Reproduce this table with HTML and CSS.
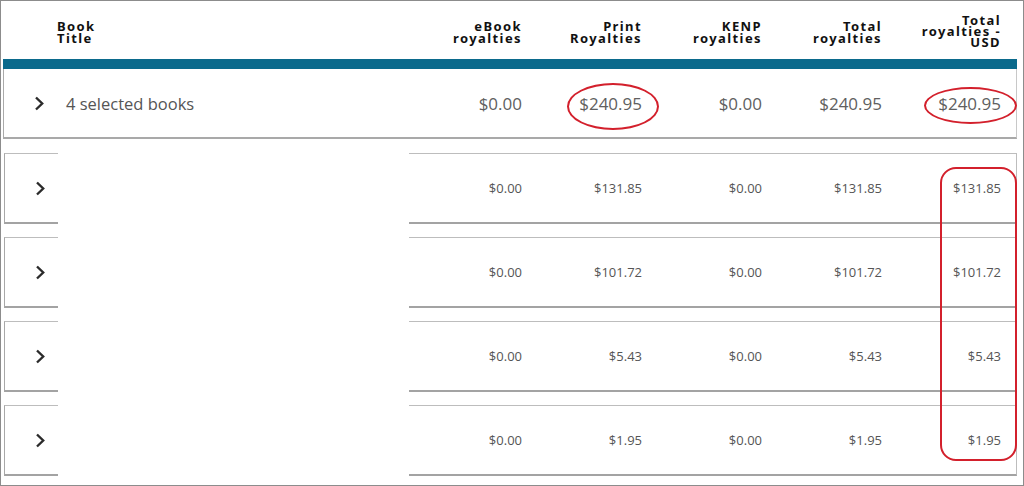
FILE: index.html
```html
<!DOCTYPE html>
<html>
<head>
<meta charset="utf-8">
<link rel="stylesheet" href="styles.css">
</head>
<body>
<div class="frame">
  <div class="head grid">
    <div class="h-title">Book<br>Title</div>
    <div class="h">eBook<br>royalties</div>
    <div class="h">Print<br>Royalties</div>
    <div class="h">KENP<br>royalties</div>
    <div class="h">Total<br>royalties</div>
    <div class="h h3">Total<br>royalties -<br>USD</div>
  </div>
  <div class="bar"></div>
  <div class="summary grid">
    <div class="title"><svg class="chev" viewBox="0 0 10 15"><path d="M2 1.5 L8.2 7.5 L2 13.5"/></svg><span class="sel">4 selected books</span></div>
    <div class="v big">$0.00</div>
    <div class="v big">$240.95</div>
    <div class="v big">$0.00</div>
    <div class="v big">$240.95</div>
    <div class="v big">$240.95</div>
  </div>
  <div class="rows">
    <div class="row grid">
      <div class="title"><svg class="chev" viewBox="0 0 10 15"><path d="M2 1.5 L8.2 7.5 L2 13.5"/></svg></div>
      <div class="v">$0.00</div><div class="v">$131.85</div><div class="v">$0.00</div><div class="v">$131.85</div><div class="v">$131.85</div>
    </div>
    <div class="row grid">
      <div class="title"><svg class="chev" viewBox="0 0 10 15"><path d="M2 1.5 L8.2 7.5 L2 13.5"/></svg></div>
      <div class="v">$0.00</div><div class="v">$101.72</div><div class="v">$0.00</div><div class="v">$101.72</div><div class="v">$101.72</div>
    </div>
    <div class="row grid">
      <div class="title"><svg class="chev" viewBox="0 0 10 15"><path d="M2 1.5 L8.2 7.5 L2 13.5"/></svg></div>
      <div class="v">$0.00</div><div class="v">$5.43</div><div class="v">$0.00</div><div class="v">$5.43</div><div class="v">$5.43</div>
    </div>
    <div class="row grid">
      <div class="title"><svg class="chev" viewBox="0 0 10 15"><path d="M2 1.5 L8.2 7.5 L2 13.5"/></svg></div>
      <div class="v">$0.00</div><div class="v">$1.95</div><div class="v">$0.00</div><div class="v">$1.95</div><div class="v">$1.95</div>
    </div>
  </div>
</div>
<div class="mask"></div>
<div class="mark ell1"></div>
<div class="mark ell2"></div>
<div class="mark rect"></div>
</body>
</html>
```

FILE: styles.css
```css
html, body {
  margin: 0;
  padding: 0;
  background: #fff;
}
body {
  position: relative;
  width: 1024px;
  height: 486px;
  overflow: hidden;
  font-family: "Open Sans", "Noto Sans", sans-serif;
}
.frame {
  box-sizing: border-box;
  width: 1024px;
  height: 486px;
  border: 1px solid #8c8c8c;
  padding: 0 6px 0 2px;
}
.grid {
  display: grid;
  grid-template-columns: 1fr 120px 120px 120px 120px 119px;
  align-items: center;
}
.head {
  height: 58px;
  padding-right: 16px;
  font-family: "Noto Sans", "Open Sans", sans-serif;
  font-weight: 700;
  font-size: 13px;
  line-height: 12px;
  letter-spacing: 1.4px;
  color: #111;
}
.h-title {
  padding-left: 54px;
  padding-top: 4px;
}
.h {
  text-align: right;
  padding-top: 4px;
}
.h.h3 {
  line-height: 11px;
  padding-top: 2px;
}
.bar {
  height: 10px;
  background: #0b6a8c;
}
.summary {
  box-sizing: border-box;
  height: 70px;
  border-left: 1px solid #aaa;
  border-right: 1px solid #c8c8c8;
  border-bottom: 2px solid #a9a9a9;
  padding-right: 15px;
}
.rows {
  display: flex;
  flex-direction: column;
  gap: 13px;
  margin-top: 14px;
  margin-left: 1px;
}
.row {
  box-sizing: border-box;
  height: 71px;
  border: 1px solid #bdbdbd;
  border-left-color: #a8a8a8;
  border-bottom: 2px solid #a3a3a3;
  padding-right: 15px;
}
.title {
  display: flex;
  align-items: center;
  padding-left: 30px;
}
.chev {
  width: 10px;
  height: 15px;
  fill: none;
  stroke: #2b2b2b;
  stroke-width: 2.4;
}
.sel {
  margin-left: 22px;
  font-size: 16.5px;
  color: #555;
}
.v {
  text-align: right;
  font-size: 13px;
  color: #555;
}
.v.big {
  font-size: 17px;
  color: #606060;
}
.mask {
  position: absolute;
  left: 58px;
  top: 146px;
  width: 351px;
  height: 335px;
  background: #fff;
}
.mark {
  position: absolute;
  box-sizing: border-box;
  border: 2px solid #d3202c;
}
.ell1 {
  left: 567px;
  top: 83px;
  width: 92px;
  height: 47px;
  border-radius: 50%;
}
.ell2 {
  left: 924px;
  top: 87px;
  width: 93px;
  height: 37px;
  border-radius: 50%;
}
.rect {
  left: 940px;
  top: 167px;
  width: 77px;
  height: 294px;
  border-radius: 16px;
}
```
